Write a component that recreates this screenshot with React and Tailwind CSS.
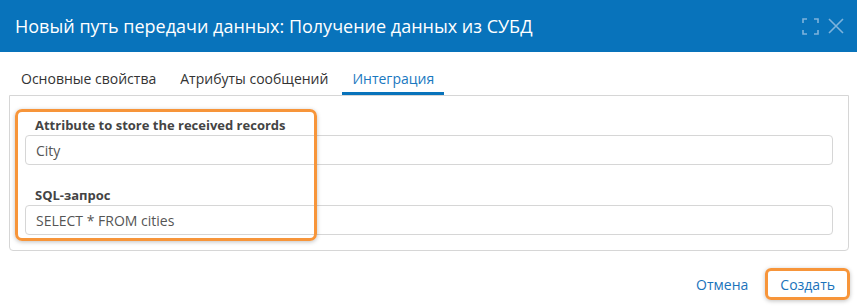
import React from 'react';

const font = { fontFamily: '"Open Sans", "Noto Sans", sans-serif' };

const Field = ({ label, value, className = '' }) => (
    <div className={className}>
        <div className="pl-[10px] text-[13px] font-bold text-[#444] leading-[18px]">{label}</div>
        <div className="mt-[1px] h-[30px] w-[808px] rounded-[4px] border border-[#d6d6d6] bg-white pl-[10px] flex items-center text-[14px] text-[#555]">
            {value}
        </div>
    </div>
);

export default function App() {
    return (
        <div className="w-[857px] h-[307px] bg-white flex flex-col overflow-hidden" style={font}>
            {/* header */}
            <div className="h-[52px] bg-[#0873bb] flex items-center pl-[15px] pr-[12px]">
                <h1 className="text-[18px] text-white leading-none flex-1">
                    Новый путь передачи данных: Получение данных из СУБД
                </h1>
                <div className="flex items-center gap-[8px] text-[#7db3dc]">
                    <svg width="17" height="17" viewBox="0 0 17 17" fill="none" stroke="currentColor" strokeWidth="1.6">
                        <path d="M1 5V1h4M12 1h4v4M16 12v4h-4M5 16H1v-4" />
                    </svg>
                    <svg width="18" height="18" viewBox="0 0 18 18" fill="none" stroke="currentColor" strokeWidth="1.6">
                        <path d="M2 2l14 14M16 2L2 16" />
                    </svg>
                </div>
            </div>

            {/* tabs */}
            <div className="flex pl-[11px] mt-[14px] text-[14px] text-[#333]">
                <div className="px-[10px] pb-[6px] pt-[2px]">Основные свойства</div>
                <div className="pl-[14px] pr-[14px] pb-[6px] pt-[2px]">Атрибуты сообщений</div>
                <div className="px-[10px] pb-[3px] pt-[2px] text-[#1a78bf] border-b-[3px] border-[#0873bb]">Интеграция</div>
            </div>

            {/* panel */}
            <div className="ml-[9px] w-[840px] h-[156px] border border-[#d6d6d6] rounded-b-[4px] pl-[15px] pt-[13px]">
                <div className="relative">
                    <div className="absolute left-[-10px] top-[0px] w-[302px] h-[132px] rounded-[7px] border-[3px] border-[#f7953a] shadow-[0_1px_4px_rgba(0,0,0,0.25)] pointer-events-none"></div>
                    <div className="pt-[7px]">
                        <Field label="Attribute to store the received records" value="City" />
                        <Field label="SQL-запрос" value="SELECT * FROM cities" className="mt-[21px]" />
                    </div>
                </div>
            </div>

            {/* footer */}
            <div className="flex justify-end items-center gap-[17px] pr-[7px] mt-[17px] text-[14px] text-[#1a73bb]">
                <span>Отмена</span>
                <span className="rounded-[6px] border-[3px] border-[#f7953a] shadow-[0_1px_4px_rgba(0,0,0,0.25)] px-[12px] h-[32px] flex items-center">Создать</span>
            </div>
        </div>
    );
}
